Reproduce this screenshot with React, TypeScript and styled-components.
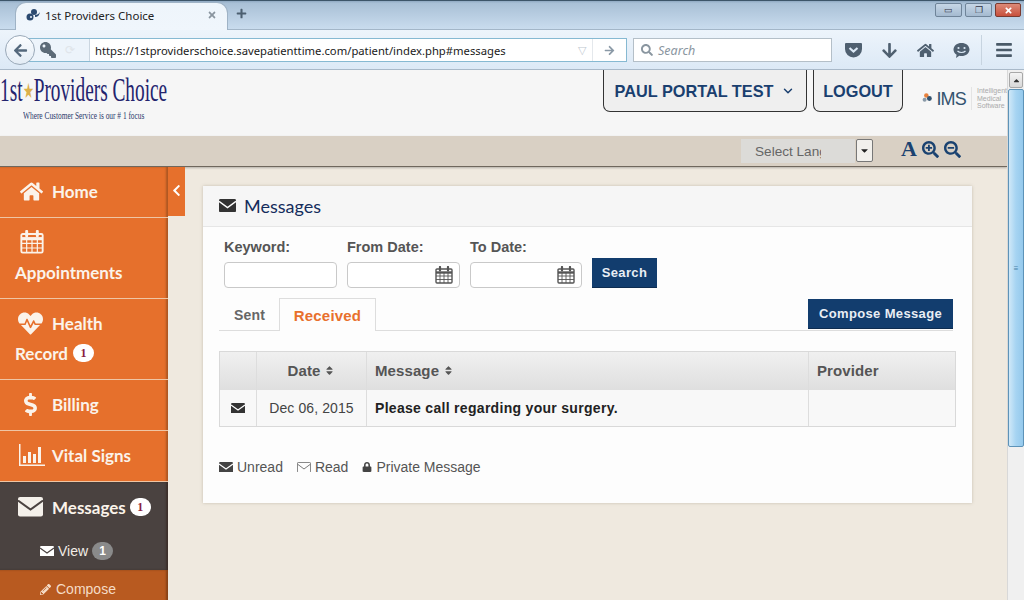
import React from "react";
import styled, { createGlobalStyle } from "styled-components";
import { FaHome, FaHeartbeat, FaDollarSign, FaPencilAlt, FaLock, FaChevronLeft, FaSort, FaArrowLeft, FaArrowRight, FaArrowDown, FaKey, FaSearch, FaPlus, FaTimes, FaBars, FaSearchPlus, FaSearchMinus, FaCaretDown, FaCaretUp } from "react-icons/fa";
import { LuChevronDown } from "react-icons/lu";

const Global = createGlobalStyle`
  html, body { margin: 0; padding: 0; width: 1024px; height: 600px; overflow: hidden; background: #efe9df; }
  * { box-sizing: border-box; }
`;
const Frame = styled.div`
  width: 1024px; height: 600px; overflow: hidden; display: flex; flex-direction: column;
  font-family: "Liberation Sans", Arial, sans-serif;
`;
const TabStrip = styled.div`
  height: 30px; flex: none; display: flex; align-items: flex-end; padding-left: 15px;
  background: linear-gradient(#8fa9c2 0, #a9c0d6 8%, #c9dcee 100%);
  border-top: 1px solid #3d5569; border-bottom: 1px solid #a3b6c8;
`;
const Tab = styled.div`
  width: 213px; height: 28px; margin-bottom: -1px; display: flex; align-items: center; padding: 0 10px 3px 10px; gap: 5px;
  background: linear-gradient(#eef5fb, #f0f6fc); border-radius: 11px 11px 0 0; border: 1px solid #9fb3c6; border-bottom: none;
  font: 11.5px "Noto Sans", sans-serif; color: #222;
`;
const TabTitle = styled.span` flex: 1; white-space: nowrap; `;
const NewTab = styled.div` margin-left: 8px; height: 27px; padding-bottom: 4px; display: flex; align-items: center; color: #4c5f70; font-size: 11px; `;
const WindowButtons = styled.div` margin-left: auto; margin-right: 3px; align-self: flex-start; display: flex; gap: 3px; margin-top: 2px; `;
const WinBtn = styled.div<{ $close?: boolean; $w: number }>`
  width: ${p => p.$w}px; height: 14px; border: 1px solid ${p => p.$close ? "#7a3a30" : "#6f8499"}; border-radius: 2px;
  background: ${p => p.$close ? "linear-gradient(#dd8a78,#c8503c)" : "linear-gradient(#c6d6e6,#a4bad0)"};
  display: flex; align-items: center; justify-content: center; color: ${p => p.$close ? "#fff" : "#334"}; font-size: 9px;
`;
const NavBar = styled.div`
  height: 40px; flex: none; display: flex; align-items: center; padding: 1px 0 0 5px; position: relative;
  background: linear-gradient(#edf4fb, #dce9f6); border-bottom: 1px solid #a9b9c9;
`;
const BackBtn = styled.div`
  width: 30px; height: 30px; border-radius: 50%; border: 1px solid #9aa9b8; background: linear-gradient(#fbfdff,#e3ecf5);
  display: flex; align-items: center; justify-content: center; color: #54687c; font-size: 15px; z-index: 1; flex: none;
`;
const UrlBar = styled.div`
  width: 601px; height: 24px; margin-left: -9px; background: #fff; border: 1px solid #86b9d2; border-left: none; display: flex; align-items: center; flex: none;
`;
const Identity = styled.div`
  width: 64px; height: 100%; flex: none; display: flex; align-items: center; padding-left: 14px; gap: 9px; color: #5c6b78; font-size: 16px;
  background: #edf4fb; border-right: 1px solid #cbd6e0;
`;
const Reload = styled.span` color: #e0e5ea; font-size: 12px; `;
const UrlText = styled.div` flex: 1; padding-left: 5px; font: 11.25px "Noto Sans", sans-serif; color: #1a1a1a; white-space: nowrap; `;
const UrlIcon = styled.div<{ $divided?: boolean }>`
  width: ${p => p.$divided ? 34 : 21}px; height: 100%; flex: none; display: flex; align-items: center; justify-content: center; color: ${p => p.$divided ? "#8a99a6" : "#c0c8d0"}; font-size: 11px;
  border-left: ${p => p.$divided ? "1px solid #e4e8ec" : "none"};
`;
const SearchBar = styled.div`
  width: 199px; height: 24px; margin-left: 6px; background: #fff; border: 1px solid #b4bfc8; display: flex; align-items: center; gap: 5px; padding-left: 7px; flex: none;
  color: #8a96a0; font: italic 12.5px "Noto Sans", sans-serif;
`;
const ToolIcons = styled.div` display: flex; margin-left: 3px; align-items: center; color: #4f6070; `;
const ToolIcon = styled.div` width: 36px; display: flex; justify-content: center; font-size: 17px; `;
const Hamburger = styled.div` margin-left: 2px; padding-left: 13px; border-left: 1px solid #c7d4e0; height: 30px; display: flex; align-items: center; font-size: 18px; color: #4a5a68; `;
const Page = styled.div` flex: 1; min-height: 0; display: flex; `;
const Main = styled.div` width: 1007px; display: flex; flex-direction: column; background: #efe9df; `;
const Scrollbar = styled.div` width: 17px; background: #f0f0f0; border-left: 1px solid #d8d8d8; display: flex; flex-direction: column; padding-top: 2px; `;
const ScrollBtn = styled.div`
  height: 16px; margin: 0 1px; background: linear-gradient(#f4f4f4,#d8d8d8); border: 1px solid #a8a8a8; border-radius: 2px; color: #333; font-size: 9px; display: flex; align-items: center; justify-content: center;
`;
const Thumb = styled.div`
  height: 358px; margin-top: 1px; background: linear-gradient(90deg,#cfe8f8,#a6d4f2 50%,#95c9ec); border: 1px solid #5d93b8; border-radius: 2px; display: flex; align-items: center; justify-content: center; color: #4a82a8; font-size: 8px;
`;
const Header = styled.header` height: 66px; flex: none; background: #f6f6f6; display: flex; align-items: flex-start; `;
const Logo = styled.div` width: 603px; flex: none; padding-top: 2px; color: #24246e; font-family: "Liberation Serif", serif; `;
const LogoName = styled.div` font-size: 33px; line-height: 37px; white-space: nowrap; transform: scaleX(0.585); transform-origin: 0 0; `;
const LogoStar = styled.span` color: #dcb04a; font-size: 21px; vertical-align: 3px; `;
const Tagline = styled.div` font-size: 11px; line-height: 12px; margin: -1px 0 0 23px; color: #2b3a6b; transform: scaleX(.67); transform-origin: 0 0; white-space: nowrap; `;
const HeaderBtn = styled.div<{ $w: number }>`
  width: ${p => p.$w}px; height: 42px; margin-right: 6px; padding-top: 1px; flex: none; background: #efefef; border: 1px solid #333; border-top: none; border-radius: 0 0 7px 7px;
  display: flex; align-items: center; justify-content: center; gap: 8px; font-weight: 700; font-size: 16.3px; color: #1a3f6f;
`;
const Ims = styled.div` margin-left: 13px; margin-top: 17px; display: flex; align-items: center; gap: 5px; width: 90px; overflow: hidden; `;
const ImsMark = styled.div` font-size: 18px; color: #33536f; letter-spacing: -.8px; white-space: nowrap; margin-left: -1px; padding-top: 2px; `;
const ImsNote = styled.div` font-size: 7px; line-height: 7.5px; color: #aaa; border-left: 1px solid #e4e4e4; padding-left: 5px; `;
const LangBar = styled.div`
  height: 31px; flex: none; background: #d9d0c4; border-bottom: 1px solid #6f675d; box-shadow: 0 1px 2px rgba(0,0,0,.25); display: flex; align-items: flex-start; padding: 3px 0 0 741px; color: #1a4270;
`;
const LangSelect = styled.div` width: 114px; height: 24px; background: #dcdbd8; color: #666; font-size: 13.6px; line-height: 25px; padding-left: 14px; overflow: hidden; white-space: nowrap; `;
const LangText = styled.div` width: 66px; overflow: hidden; `;
const LangBtn = styled.div` width: 17px; height: 23px; margin-left: 1px; background: #f2f0ec; border: 1px solid #777; border-radius: 2px; color: #222; font-size: 11px; display: flex; align-items: center; justify-content: center; `;
const LangIcons = styled.div` display: flex; align-items: center; gap: 5px; margin-left: 28px; height: 20px; font-size: 17px; `;
const BigA = styled.span` font: 700 22px "Liberation Serif", serif; line-height: 22px; `;
const Body = styled.div` flex: 1; min-height: 0; display: flex; position: relative; `;
const Sidebar = styled.nav` width: 168px; flex: none; background: #e6702c; box-shadow: inset -2px 0 2px rgba(90,50,20,.4); overflow: hidden; position: relative; font-family: Lato, sans-serif; `;
const Item = styled.div<{ $h: number }>`
  height: ${p => p.$h}px; border-bottom: 1px solid #efc5a4; color: #fbf3ea; font-weight: 700; font-size: 17px;
  padding: 0 0 2px 15px; display: flex; flex-direction: column; justify-content: center;
`;
const ItemRow = styled.div<{ $gap?: number; $left?: number }>` display: flex; align-items: center; gap: ${p => p.$gap ?? 5}px; padding-left: ${p => p.$left ?? 0}px; height: 30px; white-space: nowrap; `;
const Badge = styled.span<{ $grey?: boolean }>`
  min-width: 21px; height: 18px; border-radius: 10px; display: inline-flex; align-items: center; justify-content: center;
  font: 700 ${p => p.$grey ? "12px \"Liberation Sans\", sans-serif" : "12px \"Liberation Serif\", serif"};
  background: ${p => p.$grey ? "#8a8a8a" : "#fff"}; color: ${p => p.$grey ? "#fff" : "#8a2040"};
`;
const MessagesGroup = styled.div` height: 88px; background: #4a4240; color: #fbf3ea; font-weight: 700; font-size: 17px; display: flex; flex-direction: column; box-shadow: inset -2px 0 2px rgba(40,20,10,.4); `;
const MessagesHead = styled.div` height: 52px; padding: 0 0 2px 18px; display: flex; align-items: center; gap: 9px; `;
const MessagesBadge = styled(Badge)` margin-left: -5px; `;
const SubRow = styled.div` height: 34px; padding-left: 40px; display: flex; align-items: center; gap: 4px; font: 14px "Liberation Sans", sans-serif; color: #f2ece6; `;
const ComposeRow = styled(SubRow)` height: 38px; gap: 5px; background: #b85a20; color: #f5dcc6; box-shadow: inset -2px 0 2px rgba(60,30,10,.4); `;
const Toggle = styled.div`
  position: absolute; left: 168px; top: 0; width: 17px; height: 49px; background: #e6702c; color: #fff; display: flex; align-items: center; justify-content: center; font-size: 13px; padding-bottom: 2px;
`;
const Content = styled.main` flex: 1; min-width: 0; padding: 19px 35px 0; `;
const Card = styled.section` width: 769px; height: 317px; background: #fdfdfd; box-shadow: 0 0 3px rgba(120,110,90,.35); display: flex; flex-direction: column; `;
const CardHead = styled.div` height: 41px; flex: none; background: #f6f6f6; border-bottom: 1px solid #e6e6e6; display: flex; align-items: center; gap: 8px; padding: 0 0 1px 16px; font: 18px Lato, sans-serif; color: #142c5c; `;
const CardBody = styled.div` flex: 1; padding: 12px 19px 0 16px; `;
const Filters = styled.div` display: flex; align-items: flex-end; padding-left: 5px; gap: 10px; height: 49px; `;
const Field = styled.div<{ $w: number }>` width: ${p => p.$w}px; display: flex; flex-direction: column; gap: 6px; `;
const Label = styled.label` font-weight: 700; font-size: 14.5px; line-height: 17px; color: #555; white-space: nowrap; `;
const Input = styled.div` height: 26px; background: #fff; border: 1px solid #c9c9c9; border-radius: 4px; display: flex; align-items: center; justify-content: flex-end; padding-right: 6px; `;
const Btn = styled.button<{ $w: number }>`
  width: ${p => p.$w}px; height: 30px; border: none; border-bottom: 1px solid #0d2c50; padding: 0; background: #123d6e; color: #e9eef4; font: 700 13px "Liberation Sans", sans-serif; letter-spacing: .35px; flex: none;
`;
const ComposeBtn = styled(Btn)` margin-top: 1px; `;
const TabsRow = styled.div` height: 33px; margin-top: 10px; border-bottom: 1px solid #ddd; display: flex; justify-content: space-between; `;
const TabGroup = styled.div` display: flex; `;
const TabLink = styled.div<{ $active?: boolean }>`
  height: 33px; font-weight: 700; display: flex; align-items: center; letter-spacing: .2px;
  ${p => p.$active
    ? "width: 97px; justify-content: center; color: #e8702c; font-size: 15px; background: #fdfdfd; border: 1px solid #ddd; border-bottom: none;"
    : "width: 60px; padding-left: 15px; color: #666; font-size: 14px;"}
`;
const Table = styled.div` width: 737px; margin-top: 20px; border: 1px solid #d9d9d9; `;
const Row = styled.div<{ $head?: boolean }>`
  display: grid; grid-template-columns: 36px 110px 442px 1fr; height: ${p => p.$head ? 38 : 36}px;
  background: ${p => p.$head ? "linear-gradient(#f0f0f0,#dfdfdf)" : "#f8f8f8"};
`;
const Cell = styled.div<{ $center?: boolean; $strong?: boolean; $head?: boolean }>`
  display: flex; align-items: center; gap: 4px; padding-left: 8px; border-left: 1px solid #ddd; font-size: ${p => p.$head ? 15 : 14}px; color: ${p => p.$strong ? "#222" : p.$head ? "#555" : "#444"};
  font-weight: ${p => (p.$strong || p.$head) ? 700 : 400}; letter-spacing: ${p => p.$strong ? ".3px" : "0.1px"};
  ${p => p.$head ? "padding-bottom: 2px;" : ""}
  ${p => p.$center ? "justify-content: center; padding-left: 0;" : ""}
  &:first-child { border-left: none; }
`;
const Legend = styled.div` margin-top: 32px; display: flex; gap: 14px; font-size: 14px; color: #555; `;
const LegendItem = styled.span` display: inline-flex; align-items: center; gap: 4px; `;

const Envelope = ({ w = 18, color = "#333", flap = "#fff", outline = false }: { w?: number; color?: string; flap?: string; outline?: boolean }) => (
  <svg width={w} height={w * 0.78} viewBox="0 0 18 14">
    {outline
      ? <g fill="none" stroke={color} strokeWidth="1"><rect x=".5" y=".5" width="17" height="13" rx="1.5" /><path d="M1 3l8 6 8-6" /></g>
      : <g><rect width="18" height="14" rx="1.5" fill={color} /><path d="M0 2.5l9 6.5 9-6.5" fill="none" stroke={flap} strokeWidth="1.5" /></g>}
  </svg>
);
const Calendar = ({ size = 18, color = "#555" }: { size?: number; color?: string }) => (
  <svg width={size} height={size} viewBox="0 0 18 18" fill="none" stroke={color}>
    <rect x="1" y="3" width="16" height="14" rx="1" strokeWidth="1.4" />
    <path d="M1 6.5h16" strokeWidth="2.4" />
    <path d="M1 10h16M1 13.5h16M5 7v10M9 7v10M13 7v10" strokeWidth=".9" />
    <path d="M5 1v3.5M13 1v3.5" strokeWidth="2.2" strokeLinecap="round" />
  </svg>
);
const Chart = () => (
  <svg width="28" height="24" viewBox="0 0 28 24" fill="#fbf3ea">
    <path d="M1 1h1.5v20.5H27V23H1z" /><rect x="5" y="13" width="3" height="7" /><rect x="10" y="9" width="3" height="11" /><rect x="15" y="11" width="3" height="9" /><rect x="20" y="4" width="3" height="16" />
  </svg>
);
const Pocket = () => (
  <svg width="17" height="16" viewBox="0 0 17 16"><path d="M1 1h15a1 1 0 0 1 1 1v5a8.500 8.500 0 0 1-17 0V2a1 1 0 0 1 1-1z" fill="#4f6070" /><path d="M4.500 6l4 3.500 4-3.500" fill="none" stroke="#dce9f6" strokeWidth="2.200" /></svg>
);
const Chat = () => (
  <svg width="17" height="17" viewBox="0 0 17 17"><path d="M8.500 1c4.400 0 8 2.700 8 6.500S12.900 14 8.500 14c-.8 0-1.500-.1-2.200-.2L3 16l.6-3.300C1.700 11.500.5 9.600.5 7.500.5 3.700 4.100 1 8.500 1z" fill="#4f6070" /><circle cx="5.500" cy="6" r="1.100" fill="#dce9f6" /><circle cx="11.500" cy="6" r="1.100" fill="#dce9f6" /><path d="M4.500 9c2 2 6 2 8 0" fill="none" stroke="#dce9f6" strokeWidth="1.200" /></svg>
);
const ImsDots = () => (
  <svg width="12" height="13" viewBox="0 0 12 13"><circle cx="5" cy="3" r="2.600" fill="#e8803c" /><circle cx="8.500" cy="6.500" r="2.800" fill="#33536f" /><circle cx="3" cy="8" r="2.300" fill="#8a9aa8" /></svg>
);
const Favicon = () => (
  <svg width="14" height="12" viewBox="0 0 14 12" fill="#2b4a70"><circle cx="4" cy="8" r="3.500" /><circle cx="8" cy="3" r="3" /><path d="M9 6c2 0 4-1 5-3-.5 3-2 5-5 5z" /><circle cx="5" cy="8" r="1" fill="#eef5fb" /></svg>
);

const SortMark = () => <FaSort size={11} color="#555" />;

export default function App() {
  return (
    <Frame>
      <Global />
      <TabStrip>
        <Tab>
          <Favicon />
          <TabTitle>1st Providers Choice</TabTitle>
          <FaTimes size={10} color="#8a959f" />
        </Tab>
        <NewTab><FaPlus /></NewTab>
        <WindowButtons>
          <WinBtn $w={27}>▭</WinBtn>
          <WinBtn $w={27}>❐</WinBtn>
          <WinBtn $w={26} $close><FaTimes /></WinBtn>
        </WindowButtons>
      </TabStrip>
      <NavBar>
        <BackBtn><FaArrowLeft /></BackBtn>
        <UrlBar>
          <Identity><FaKey style={{ transform: "scaleX(-1)" }} /><Reload>⟳</Reload></Identity>
          <UrlText>https://1stproviderschoice.savepatienttime.com/patient/index.php#messages</UrlText>
          <UrlIcon>▽</UrlIcon>
          <UrlIcon $divided><FaArrowRight /></UrlIcon>
        </UrlBar>
        <SearchBar><FaSearch size={12} />Search</SearchBar>
        <ToolIcons>
          <ToolIcon><Pocket /></ToolIcon>
          <ToolIcon><FaArrowDown /></ToolIcon>
          <ToolIcon><FaHome /></ToolIcon>
          <ToolIcon><Chat /></ToolIcon>
          <Hamburger><FaBars /></Hamburger>
        </ToolIcons>
      </NavBar>
      <Page>
        <Main>
          <Header>
            <Logo>
              <LogoName>1st<LogoStar>★</LogoStar>Providers Choice</LogoName>
              <Tagline>Where Customer Service is our # 1 focus</Tagline>
            </Logo>
            <HeaderBtn $w={204}>PAUL PORTAL TEST <LuChevronDown size={14} strokeWidth={2.5} /></HeaderBtn>
            <HeaderBtn $w={90}>LOGOUT</HeaderBtn>
            <Ims>
              <ImsDots />
              <ImsMark>IMS</ImsMark>
              <ImsNote>Intelligent<br />Medical<br />Software</ImsNote>
            </Ims>
          </Header>
          <LangBar>
            <LangSelect><LangText>Select Language</LangText></LangSelect>
            <LangBtn><FaCaretDown /></LangBtn>
            <LangIcons><BigA>A</BigA><FaSearchPlus /><FaSearchMinus /></LangIcons>
          </LangBar>
          <Body>
            <Sidebar>
              <Item $h={51}><ItemRow $left={5} $gap={9}><FaHome size={23} />Home</ItemRow></Item>
              <Item $h={81}><ItemRow $left={5}><Calendar size={24} color="#fbf3ea" /></ItemRow><ItemRow>Appointments</ItemRow></Item>
              <Item $h={81}><ItemRow $left={3} $gap={9}><FaHeartbeat size={25} />Health</ItemRow><ItemRow>Record <Badge>1</Badge></ItemRow></Item>
              <Item $h={51}><ItemRow $left={4} $gap={10}><FaDollarSign size={23} />Billing</ItemRow></Item>
              <Item $h={51}><ItemRow $left={3} $gap={6}><Chart />Vital Signs</ItemRow></Item>
              <MessagesGroup>
                <MessagesHead><Envelope w={25} color="#f4f0ea" flap="#4a4240" />Messages <MessagesBadge>1</MessagesBadge></MessagesHead>
                <SubRow><Envelope w={14} color="#fff" flap="#4a4240" />View <Badge $grey>1</Badge></SubRow>
              </MessagesGroup>
              <ComposeRow><FaPencilAlt size={11} />Compose</ComposeRow>
            </Sidebar>
            <Toggle><FaChevronLeft /></Toggle>
            <Content>
              <Card>
                <CardHead><Envelope w={17} />Messages</CardHead>
                <CardBody>
                  <Filters>
                    <Field $w={113}><Label>Keyword:</Label><Input /></Field>
                    <Field $w={113}><Label>From Date:</Label><Input><Calendar /></Input></Field>
                    <Field $w={112}><Label>To Date:</Label><Input><Calendar /></Input></Field>
                    <Btn $w={65}>Search</Btn>
                  </Filters>
                  <TabsRow>
                    <TabGroup>
                      <TabLink>Sent</TabLink>
                      <TabLink $active>Received</TabLink>
                    </TabGroup>
                    <ComposeBtn $w={145}>Compose Message</ComposeBtn>
                  </TabsRow>
                  <Table>
                    <Row $head>
                      <Cell />
                      <Cell $center $head>Date <SortMark /></Cell>
                      <Cell $head>Message <SortMark /></Cell>
                      <Cell $head>Provider</Cell>
                    </Row>
                    <Row>
                      <Cell $center><Envelope w={14} /></Cell>
                      <Cell $center>Dec 06, 2015</Cell>
                      <Cell $strong>Please call regarding your surgery.</Cell>
                      <Cell />
                    </Row>
                  </Table>
                  <Legend>
                    <LegendItem><Envelope w={14} color="#444" />Unread</LegendItem>
                    <LegendItem><Envelope w={14} color="#555" outline />Read</LegendItem>
                    <LegendItem><FaLock size={10} color="#444" />Private Message</LegendItem>
                  </Legend>
                </CardBody>
              </Card>
            </Content>
          </Body>
        </Main>
        <Scrollbar>
          <ScrollBtn><FaCaretUp /></ScrollBtn>
          <Thumb>≡</Thumb>
        </Scrollbar>
      </Page>
    </Frame>
  );
}
